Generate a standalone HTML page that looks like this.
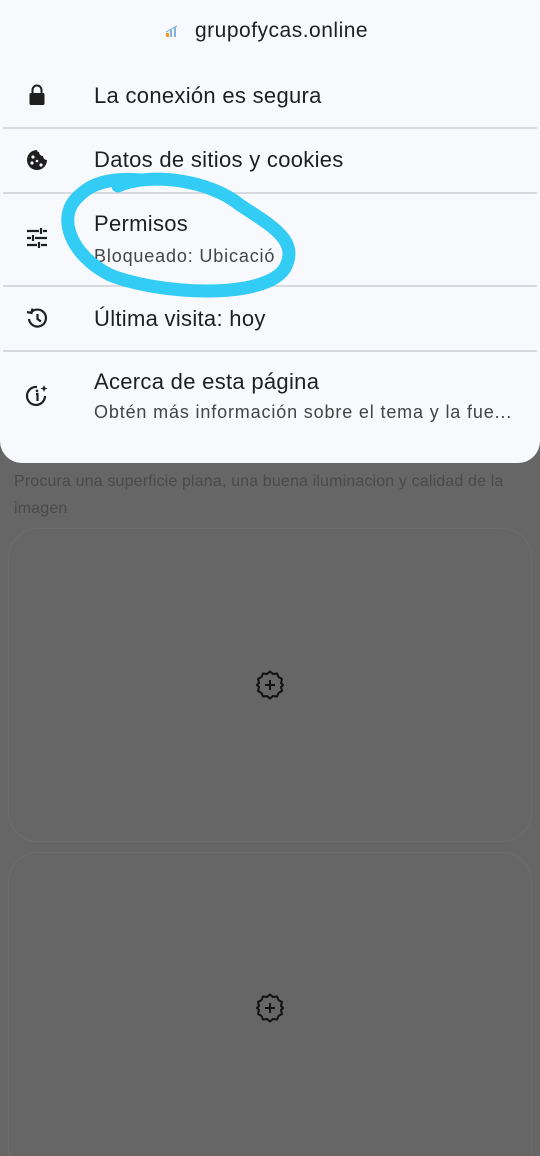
<!DOCTYPE html>
<html><head><meta charset="utf-8"><style>
*{margin:0;padding:0;box-sizing:border-box}
html,body{width:540px;height:1156px;overflow:hidden}
body{background:#666666;font-family:"Liberation Sans",sans-serif;position:relative}
.panel{position:absolute;left:0;top:0;width:540px;height:463px;background:#f8f9fd;border-radius:0 0 22px 22px}
.t{position:absolute;color:#1f1f1f;font-size:22px;letter-spacing:.3px}
.s{position:absolute;color:#444;font-size:18px;letter-spacing:.85px}
.hr{position:absolute;left:3px;width:534px;height:1.5px;background:#d9dadf}
.card{position:absolute;left:8px;width:524px;border:1.5px solid #6d6d6d;border-radius:30px;background:#666}
.bg{position:absolute;color:#4a4a4a;font-size:16px;letter-spacing:.15px}
</style></head><body>
<div class="bg" style="left:14px;top:468px;line-height:27px">Procura una superficie plana, una buena iluminacion y calidad de la<br>imagen</div>
<div class="card" style="top:528px;height:314px"></div>
<div class="card" style="top:852px;height:330px"></div>
<svg style="position:absolute;left:254px;top:669px" width="32" height="32" viewBox="0 0 32 32"><path d="M16 2.5 19 5 23 4.5 24.5 8 28 10 27 14 29 16 27 18 28 22 24.5 24 23 27.5 19 27 16 29.5 13 27 9 27.5 7.5 24 4 22 5 18 3 16 5 14 4 10 7.5 8 9 4.5 13 5Z" fill="none" stroke="#111" stroke-width="2" stroke-linejoin="round"/><path d="M16 11v10M11 16h10" stroke="#111" stroke-width="2"/></svg>
<svg style="position:absolute;left:254px;top:992px" width="32" height="32" viewBox="0 0 32 32"><path d="M16 2.5 19 5 23 4.5 24.5 8 28 10 27 14 29 16 27 18 28 22 24.5 24 23 27.5 19 27 16 29.5 13 27 9 27.5 7.5 24 4 22 5 18 3 16 5 14 4 10 7.5 8 9 4.5 13 5Z" fill="none" stroke="#111" stroke-width="2" stroke-linejoin="round"/><path d="M16 11v10M11 16h10" stroke="#111" stroke-width="2"/></svg>

<div class="panel">
<svg style="position:absolute;left:164px;top:23px" width="16" height="16" viewBox="0 0 16 16"><rect x="2" y="10" width="3" height="4" fill="#f39a1e"/><rect x="6" y="7" width="2" height="7" fill="#7fb2e0"/><rect x="10" y="4" width="2" height="10" fill="#7fb2e0"/><path d="M2 9 L13 3" stroke="#7fb2e0" stroke-width="1"/></svg>
<div class="t" style="left:195px;top:19px;font-size:21px;letter-spacing:.5px">grupofycas.online</div>

<svg style="position:absolute;left:27px;top:84px" width="20" height="22" viewBox="0 0 20 22"><path d="M5.5 9V6a4.5 4.5 0 0 1 9 0v3" fill="none" stroke="#1f1f1f" stroke-width="2"/><rect x="2.5" y="9" width="15" height="12" rx="1.5" fill="#1f1f1f"/></svg>
<div class="t" style="left:94px;top:83px">La conexión es segura</div>
<div class="hr" style="top:127px"></div>

<svg style="position:absolute;left:25px;top:148px" width="24" height="24" viewBox="0 0 24 24"><path d="M12 2a10 10 0 1 0 10 10 4 4 0 0 1-4-4 4 4 0 0 1-4-4 2 2 0 0 1-2-2Z" fill="#1f1f1f"/><circle cx="8" cy="9" r="1.6" fill="#f8f9fd"/><circle cx="7" cy="15" r="1.6" fill="#f8f9fd"/><circle cx="12" cy="13" r="1.3" fill="#f8f9fd"/><circle cx="16" cy="17" r="1.6" fill="#f8f9fd"/></svg>
<div class="t" style="left:94px;top:147px">Datos de sitios y cookies</div>
<div class="hr" style="top:192px"></div>

<svg style="position:absolute;left:26px;top:228px" width="22" height="20" viewBox="0 0 22 20"><path d="M1 3h12M17 3h4M15 0v6M1 10h4M9 10h12M7 7v6M1 17h10M15 17h6M13 14v6" stroke="#1f1f1f" stroke-width="2.2"/></svg>
<div class="t" style="left:94px;top:211px">Permisos</div>
<div class="s" style="left:94px;top:246px">Bloqueado: Ubicació</div>
<div class="hr" style="top:285px"></div>

<svg style="position:absolute;left:25px;top:306px" width="24" height="24" viewBox="0 0 24 24"><path d="M4 13A8.5 8.5 0 1 0 6 6.5" fill="none" stroke="#1f1f1f" stroke-width="2.2"/><path d="M2 6 6.5 7 7.5 2.5" fill="none" stroke="#1f1f1f" stroke-width="2.2"/><path d="M12.5 8v5l3.5 2.5" fill="none" stroke="#1f1f1f" stroke-width="2.2"/></svg>
<div class="t" style="left:94px;top:306px">Última visita: hoy</div>
<div class="hr" style="top:350px"></div>

<svg style="position:absolute;left:25px;top:384px" width="24" height="24" viewBox="0 0 24 24"><path d="M20 12A9 9 0 1 1 12 3" fill="none" stroke="#1f1f1f" stroke-width="2.2"/><path d="M11 10h1.5v7" fill="none" stroke="#1f1f1f" stroke-width="2.2"/><circle cx="12" cy="6.8" r="1.3" fill="#1f1f1f"/><path d="M19 1l1 2.5 2.5 1-2.5 1-1 2.5-1-2.5-2.5-1 2.5-1Z" fill="#1f1f1f"/></svg>
<div class="t" style="left:94px;top:369px">Acerca de esta página</div>
<div class="s" style="left:94px;top:402px">Obtén más información sobre el tema y la fue...</div>
</div>

<svg style="position:absolute;left:0;top:0" width="540" height="320"><path d="M118 186 C150 172 210 180 240 205 C270 225 300 240 285 268 C265 300 160 295 110 275 C70 255 55 215 80 195 C95 180 120 178 140 180" fill="none" stroke="#33ccf5" stroke-width="13" stroke-linecap="round"/></svg>
</body></html>
